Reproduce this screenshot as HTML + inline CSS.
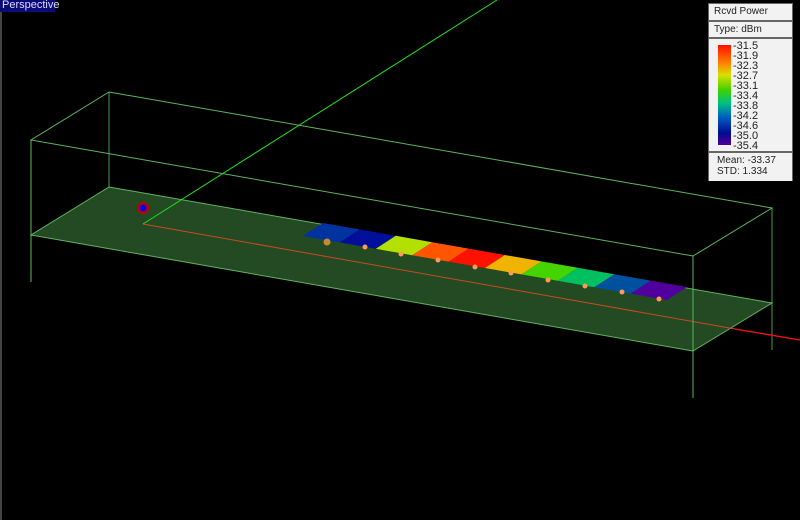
<!DOCTYPE html>
<html><head><style>
html,body{margin:0;padding:0;background:#000;width:800px;height:520px;overflow:hidden;position:relative;font-family:"Liberation Sans",sans-serif}
.lbl{position:absolute;left:0;top:0;background:#0a0a78;color:#dcdcff;font-size:11px;line-height:11px;padding:0 3px 1px 2px;width:50px}
.lg{position:absolute;left:708px;top:3px;width:85px;height:178px;background:#666}
.r{position:absolute;left:1px;width:83px;background:#f2f2f2;font-size:10px;color:#222}
</style></head><body>
<svg width="800" height="520" style="position:absolute;left:0;top:0">
<line x1="1" y1="0" x2="1" y2="520" stroke="#888" stroke-width="1"/>
<line x1="109" y1="92" x2="109" y2="234" stroke="#4a9a4a"/>
<line x1="772" y1="208" x2="772" y2="350" stroke="#4a9a4a"/>
<polygon points="109,187 772,303 693,351 31,235" fill="#234a23" stroke="#5fb35f" stroke-width="1"/>
<line x1="143" y1="224" x2="735" y2="329" stroke="#c84a20" stroke-width="1"/>
<line x1="735" y1="329" x2="800" y2="340" stroke="#ff1010" stroke-width="1.3"/>
<line x1="143" y1="224" x2="497" y2="0" stroke="#22dd22" stroke-width="1"/>
<g>
<polygon points="323,223 359.4,229.4 339.4,242.4 303,236" fill="#0033a0"/>
<polygon points="359.4,229.4 395.8,235.8 375.8,248.8 339.4,242.4" fill="#000f99"/>
<polygon points="395.8,235.8 432.2,242.2 412.2,255.2 375.8,248.8" fill="#b4e000"/>
<polygon points="432.2,242.2 468.6,248.6 448.6,261.6 412.2,255.2" fill="#ff5500"/>
<polygon points="468.6,248.6 505,255 485,268 448.6,261.6" fill="#ff1100"/>
<polygon points="505,255 541.4,261.4 521.4,274.4 485,268" fill="#f0b400"/>
<polygon points="541.4,261.4 577.8,267.8 557.8,280.8 521.4,274.4" fill="#44d400"/>
<polygon points="577.8,267.8 614.2,274.2 594.2,287.2 557.8,280.8" fill="#00c060"/>
<polygon points="614.2,274.2 650.6,280.6 630.6,293.6 594.2,287.2" fill="#0050a0"/>
<polygon points="650.6,280.6 687,287 667,300 630.6,293.6" fill="#50009c"/>
</g>
<g fill="#ff9a55">
<circle cx="327" cy="242" r="3.5" fill="#c88a30"/><circle cx="365" cy="247" r="2.5"/><circle cx="401" cy="254" r="2.5"/><circle cx="438" cy="260" r="2.5"/><circle cx="475" cy="267" r="2.5"/><circle cx="511" cy="273" r="2.5"/><circle cx="548" cy="280" r="2.5"/><circle cx="585" cy="286" r="2.5"/><circle cx="622" cy="292" r="2.5"/><circle cx="659" cy="299" r="2.5"/>
</g>
<circle cx="143" cy="208" r="6" fill="#c00000"/>
<circle cx="143" cy="208" r="4" fill="#6a0a4a"/>
<circle cx="143" cy="208" r="3" fill="#0000ff"/>
<g stroke="#5fb35f" fill="none">
<polygon points="109,92 772,208 693,256 31,140"/>
<line x1="31" y1="140" x2="31" y2="282"/>
<line x1="693" y1="256" x2="693" y2="398"/>
</g>
</svg>
<div class="lbl">Perspective</div>
<div class="lg">
<div class="r" style="top:1px;height:16px;line-height:16px;padding-left:5px;width:78px">Rcvd Power</div>
<div class="r" style="top:19px;height:15px;line-height:15px;padding-left:5px;width:78px">Type: dBm</div>
<div class="r" style="top:36px;height:112px">
<div style="position:absolute;left:9px;top:6px;width:13px;height:100px;background:linear-gradient(#ff1000,#ff8000 18%,#d8e000 30%,#40d000 45%,#00c080 58%,#0060c0 72%,#000c90 88%,#500098)"></div>
<div style="position:absolute;left:24px;top:2px;font-size:11px;line-height:10px">-31.5<br>-31.9<br>-32.3<br>-32.7<br>-33.1<br>-33.4<br>-33.8<br>-34.2<br>-34.6<br>-35.0<br>-35.4</div>
</div>
<div class="r" style="top:150px;height:26px;line-height:11px;padding:2px 0 0 8px;width:75px">Mean: -33.37<br>STD: 1.334</div>
</div>
</body></html>
